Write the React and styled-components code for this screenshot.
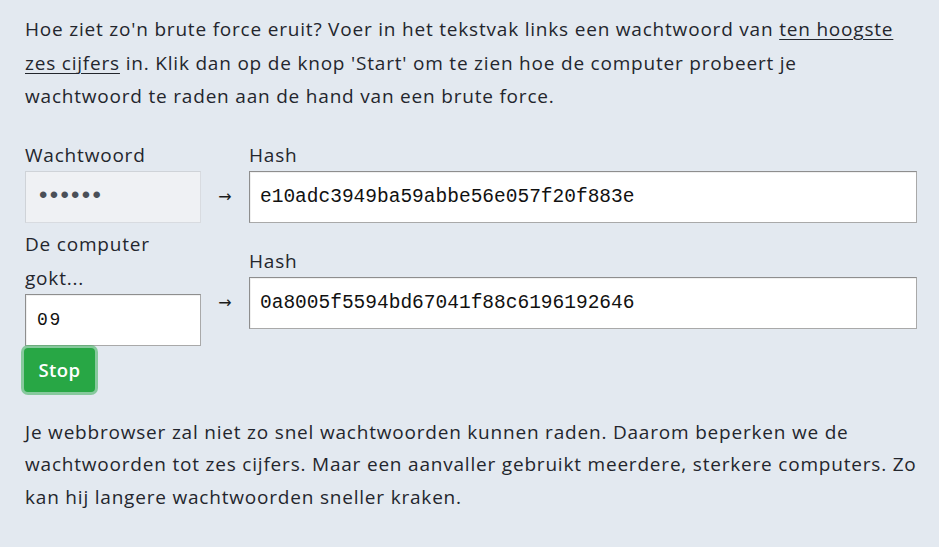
import React from "react";
import styled, { createGlobalStyle } from "styled-components";

const Global = createGlobalStyle`
  html, body { margin: 0; padding: 0; background: #e3e9f0; }
  body { font-family: "Open Sans", "Liberation Sans", sans-serif; color: #23262d; }
`;

const Page = styled.main`
  width: 939px;
  height: 547px;
  box-sizing: border-box;
  padding: 13px 22px 0 25px;
  background: #e3e9f0;
`;

const Text = styled.p`
  margin: 0 0 ${(p) => p.$mb || 0}px;
  font-size: 19px;
  letter-spacing: 0.8px;
  line-height: ${(p) => p.$lh || 33.5}px;
`;

const Under = styled.span`
  text-decoration: underline;
  text-underline-offset: 3px;
  text-decoration-thickness: 1px;
`;

const Form = styled.div`
  display: flex;
  flex-direction: column;
  gap: 4px;
`;

const Row = styled.div`
  display: grid;
  grid-template-columns: 176px 48px 1fr;
  align-items: center;
`;

const Field = styled.label`
  display: flex;
  flex-direction: column;
`;

const Label = styled.span`
  font-size: 19px;
  letter-spacing: 0.8px;
  line-height: 34px;
  margin-bottom: -1px;
`;

const Arrow = styled.span`
  margin-top: 33px;
  text-align: center;
  font-family: "DejaVu Sans", sans-serif;
  font-size: 16px;
  line-height: 20px;
  color: #1c1c1c;
`;

const Input = styled.input`
  box-sizing: border-box;
  width: 100%;
  height: 52px;
  margin: 0;
  padding: 0 ${(p) => p.$px || 10}px;
  border: 1px solid ${(p) => (p.disabled ? "#cfd3d8" : "#8e8e8e")};
  border-right-color: ${(p) => (p.disabled ? "#d8dbe0" : "#a9a9a9")};
  border-bottom-color: ${(p) => (p.disabled ? "#d8dbe0" : "#a9a9a9")};
  box-shadow: ${(p) => (p.disabled ? "none" : "inset 1px 1px 0 rgba(0,0,0,0.06)")};
  border-radius: 0;
  background: ${(p) => (p.disabled ? "#eff1f4" : "#ffffff")};
  color: ${(p) => (p.disabled ? "#4a4f57" : "#111")};
  font-family: "Liberation Mono", "DejaVu Sans Mono", monospace;
  font-size: ${(p) => p.$fs || 19.5}px;
  letter-spacing: ${(p) => p.$ls || 0}px;
  outline: none;
`;

const Button = styled.button`
  align-self: flex-start;
  margin: -2px 0 0 -1px;
  width: 71px;
  height: 44px;
  border: none;
  border-radius: 4px;
  background: #28a745;
  color: #fff;
  font-family: "Open Sans", "Liberation Sans", sans-serif;
  font-size: 18.5px;
  font-weight: 600;
  letter-spacing: 0.4px;
  box-shadow: 0 0 0 3px rgba(60, 175, 90, 0.55);
  cursor: pointer;
`;

export default function App() {
  return (
    <>
      <Global />
      <Page>
        <Text $mb={24}>
          Hoe ziet zo'n brute force eruit? Voer in het tekstvak links een wachtwoord van{" "}
          <Under>ten hoogste zes cijfers</Under> in. Klik dan op de knop 'Start' om te zien hoe de
          computer probeert je wachtwoord te raden aan de hand van een brute force.
        </Text>
        <Form>
          <Row>
            <Field>
              <Label>Wachtwoord</Label>
              <Input type="password" value="123456" disabled readOnly $px={10} $fs={24} $ls={-3.7} />
            </Field>
            <Arrow>→</Arrow>
            <Field>
              <Label>Hash</Label>
              <Input type="text" value="e10adc3949ba59abbe56e057f20f883e" readOnly />
            </Field>
          </Row>
          <Row>
            <Field>
              <Label>De computer gokt...</Label>
              <Input type="text" value="09" readOnly $px={11} $fs={18} $ls={1.8} />
            </Field>
            <Arrow>→</Arrow>
            <Field>
              <Label>Hash</Label>
              <Input type="text" value="0a8005f5594bd67041f88c6196192646" readOnly />
            </Field>
          </Row>
          <Button type="button">Stop</Button>
        </Form>
        <Text $lh={32.5} style={{ marginTop: 24 }}>
          Je webbrowser zal niet zo snel wachtwoorden kunnen raden. Daarom beperken we de
          wachtwoorden tot zes cijfers. Maar een aanvaller gebruikt meerdere, sterkere computers. Zo
          kan hij langere wachtwoorden sneller kraken.
        </Text>
      </Page>
    </>
  );
}
